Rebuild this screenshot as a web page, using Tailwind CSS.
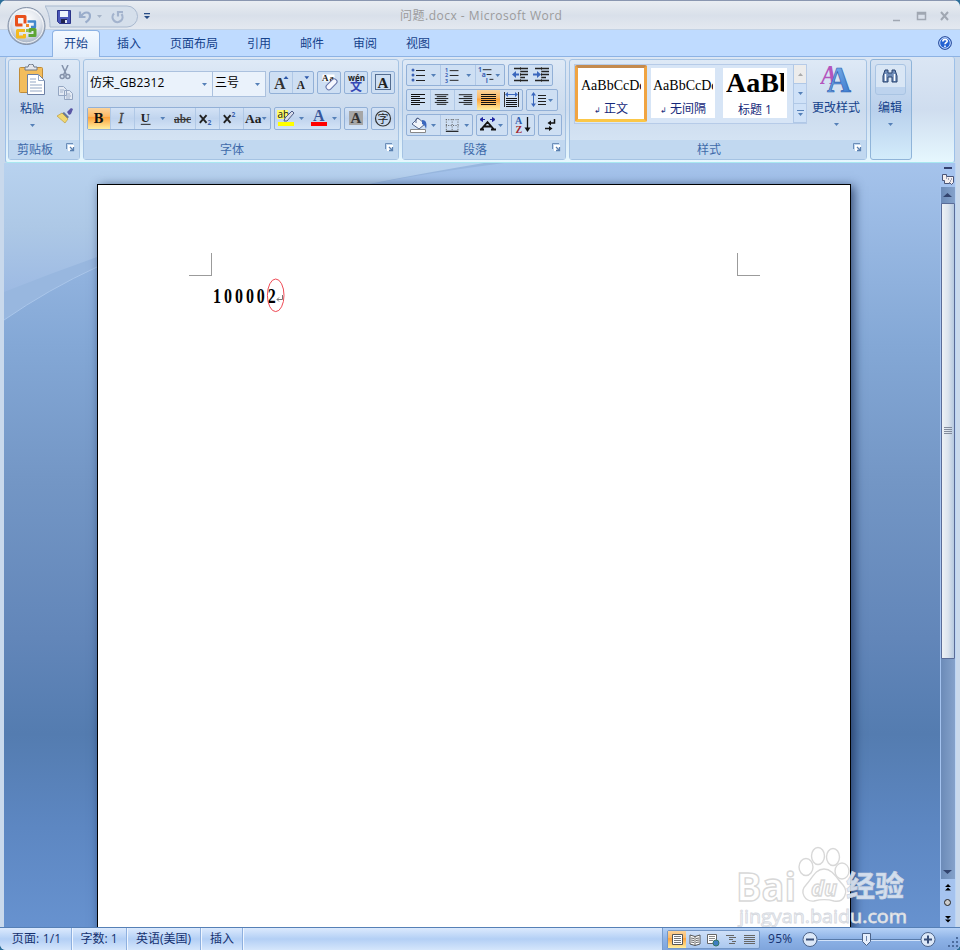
<!DOCTYPE html>
<html lang="zh-CN">
<head>
<meta charset="utf-8">
<title>问题.docx - Microsoft Word</title>
<script src="https://cdn.jsdelivr.net/npm/@tailwindcss/browser@4"></script>
</head>
<body class="w-[960px] h-[950px] overflow-hidden bg-[#2d6f9a] text-[12px] leading-[16px] text-[#15428b] [font-family:'Open_Sans','Noto_Sans_CJK_SC',sans-serif]">

<svg class="absolute size-0">
  <defs>
    <linearGradient id="orange" x1="0" y1="0" x2="0" y2="1"><stop offset="0" stop-color="#fbd49c"/><stop offset=".4" stop-color="#fdb965"/><stop offset=".45" stop-color="#fda23c"/><stop offset="1" stop-color="#ffef9f"/></linearGradient>
    <linearGradient id="blueA" x1="0" y1="0" x2="1" y2="1"><stop offset="0" stop-color="#89bdf2"/><stop offset="1" stop-color="#3272c9"/></linearGradient>
    <radialGradient id="orb" cx=".5" cy=".35" r=".65"><stop offset="0" stop-color="#fff"/><stop offset=".6" stop-color="#dfe4ec"/><stop offset="1" stop-color="#9ba9bd"/></radialGradient>
    <symbol id="dd" viewBox="0 0 5 3"><path d="M0 0h5L2.500 3z" fill="#5580b8"/></symbol>
    <symbol id="launch" viewBox="0 0 9 9"><path d="M.5 6V.5H7" fill="none" stroke="#6b8db8"/><rect x="2" y="2" width="6" height="6" fill="#fff"/><path d="M4 4l3 3M7.500 4v3.500H4" fill="none" stroke="#5a80b0" stroke-width="1.300"/></symbol>
  </defs>
</svg>

<div class="flex flex-col w-[960px] h-[950px] rounded-t-[7px] rounded-b-[6px] overflow-hidden bg-[#c9d9ec]">

  <!-- title bar -->
  <header class="relative flex items-center h-[30px] shrink-0 border-t border-[#8996b0] bg-linear-to-b from-[#e9edf2] via-[#d9e0ea] to-[#e4e9f0] shadow-[inset_0_-1px_0_#c3d2e4]">
    <svg class="absolute left-[45px] top-[4px]" width="94" height="24" viewBox="0 0 94 24">
      <path d="M0 1H82a10.500 10.500 0 0 1 0 21H5C5 12 3 6 0 1z" fill="#d5dfeb" stroke="#a9b9cf"/>
    </svg>
    <div class="relative flex items-center w-[400px] pl-[57px] pt-[2px] gap-[6px]">
      <svg width="14" height="14" viewBox="0 0 14 14"><path d="M.5.5h13v13h-11l-2-2z" fill="#4a56b8" stroke="#2b3488"/><path d="M3 1h8v6H3z" fill="#edf3fc"/><path d="M4 9h6v4H4z" fill="#20234f"/><path d="M8 10h2v3H8z" fill="#dfe6f4"/></svg>
      <svg width="28" height="14" viewBox="0 0 28 14"><path d="M3 1.500v5.500h5.500M4 6.500C7 1 13 1.500 13 6c0 3-2 5-4.500 6.500" fill="none" stroke="#9aadcb" stroke-width="2.200"/><path d="M20 5h5l-2.500 3z" fill="#a6b4c8"/></svg>
      <svg width="14" height="14" viewBox="0 0 14 14"><path d="M3 3.500A5 5 0 1 0 10.500 4M7 6.500V2h5" fill="none" stroke="#a3b3cd" stroke-width="2.200"/></svg>
      <svg class="ml-[13px]" width="6" height="7" viewBox="0 0 6 7"><path d="M0 0h6v1.200H0zM0 3h6L3 6z" fill="#274b85"/></svg>
    </div>
    <div class="w-[200px] text-[#9b9b9b] tracking-[0.5px] whitespace-nowrap">问题.docx - Microsoft Word</div>
    <svg class="ml-[291px]" width="62" height="14" viewBox="0 0 62 14"><path d="M2 11.500h7M26.500 3.500h8v7h-8zM27 5h8" fill="none" stroke="#a0a7b2" stroke-width="1.500"/><path d="M50 3l7 8M57 3l-7 8" stroke="#a0a7b2" stroke-width="2"/></svg>
  </header>

  <!-- office button -->
  <svg class="absolute left-[6px] top-[5px]" width="42" height="42" viewBox="0 0 42 42">
    <circle cx="20.500" cy="21" r="18.500" fill="url(#orb)" stroke="#8290a6"/>
    <circle cx="20.500" cy="21" r="16.800" fill="none" stroke="#fff" stroke-opacity=".8"/>
    <g fill="none" stroke-width="3" stroke-linejoin="round">
      <path d="M19 18.500V11.500h-8.500v8.500h6" stroke="#e8501c"/><path d="M21.500 16.500h7.500v5.500h-4" stroke="#4288cc" stroke-width="2.400"/>
      <path d="M19 25.500h-7.500v6.500h7v-3" stroke="#f5b91e"/><path d="M22.500 30.500h6.500v-6h-5v3" stroke="#5da533"/>
    </g>
    <path d="M20 19h3v3h-3z" fill="#f28a2a"/><path d="M20 24h3v3h-3z" fill="#93c14e"/>
  </svg>

  <!-- ribbon tabs -->
  <nav class="flex items-end h-[27px] shrink-0 bg-[#bfdbff] px-[5px] shadow-[inset_0_-1px_0_#8db2e3] text-[12px]">
    <div class="relative z-10 ml-[47px] w-[48px] h-[27px] pt-[5px] text-center rounded-t-[4px] border border-b-0 border-[#8db2e3] bg-linear-to-b from-[#f4f9ff] to-[#e0ecfa]">开始</div>
    <div class="flex h-[27px] pt-[6px] pl-[17px] gap-[29px] whitespace-nowrap">
      <span>插入</span><span>页面布局</span><span>引用</span><span>邮件</span><span>审阅</span><span>视图</span>
    </div>
    <svg class="ml-auto mr-[3px] mb-[7px]" width="14" height="14" viewBox="0 0 14 14"><circle cx="7" cy="7" r="6.300" fill="#2462d2" stroke="#1c3d8d"/><circle cx="7" cy="7" r="5.300" fill="none" stroke="#cfe2ff"/><path d="M4.800 5.500c0-3 4.600-2.700 4.400-.3C9.100 6.600 7 6.500 7 8.300M7 9.500V11" fill="none" stroke="#fff" stroke-width="1.600"/></svg>
  </nav>

  <!-- ribbon -->
  <section class="flex h-[106px] shrink-0 mx-[5px] pt-[2px] pl-[2px] gap-[3px] rounded-[3px] border-x border-b border-b-[#a8e8f0] border-x-[#9dc0e8] bg-linear-to-b from-[#dbe6f4] via-[#cfddef] to-[#e6f7fe]">

    <!-- clipboard -->
    <div class="flex flex-col w-[72px] h-[101px] rounded-[3px] border border-[#a5c3e3] bg-linear-to-b from-[#dee9f6] via-[#cbdbee] to-[#dae8f6]">
      <div class="flex h-[80px]">
        <div class="flex flex-col items-center w-[46px] pt-[4px]">
          <svg width="28" height="32" viewBox="0 0 28 32"><rect x="1.500" y="3.500" width="23" height="25" rx="1" fill="#f3bd5c" stroke="#c08c39"/><path d="M7 6V3h3a3 3 0 0 1 6 0h3v3z" fill="#e3e5ea" stroke="#6f7889"/><path d="M9.500 10.500h11l6 6v14h-17z" fill="#fff" stroke="#6c80a5"/><path d="M20.500 10.500v6h6M12 15h6M12 18h6M12 21h12M12 24h12M12 27h12" fill="none" stroke="#93a6c4"/></svg>
          <span class="mt-[5px]">粘贴</span>
          <svg class="mt-[7px]" width="5" height="3"><use href="#dd"/></svg>
        </div>
        <div class="flex flex-col items-center pt-[5px] gap-[6px] ml-[2px]">
          <svg width="12" height="15" viewBox="0 0 12 15"><path d="M3 0l4.500 10M9 0L4.500 10" stroke="#8492aa" stroke-width="1.500"/><circle cx="3.200" cy="11.500" r="2" fill="none" stroke="#8492aa" stroke-width="1.500"/><circle cx="8.800" cy="11.500" r="2" fill="none" stroke="#8492aa" stroke-width="1.500"/></svg>
          <svg width="15" height="14" viewBox="0 0 15 14"><path d="M.5.500h5l3 3v6h-8zM6.500 4.500h5l3 3v6h-8z" fill="#e3eaf4" stroke="#94a6c2"/><path d="M2 4h4M2 6h3M8 8h4M8 10h5M8 12h4" stroke="#a2b2cb"/></svg>
          <svg class="mt-[2px]" width="16" height="16" viewBox="0 0 16 16"><path d="M10 4l4-4 2 1-2 5-2 1z" fill="#5a57a5"/><path d="M7 4l5 5-2 2-6-5z" fill="#67799c"/><path d="M5 5l6 6-3 4L0 8z" fill="#f1d771" stroke="#b79332" stroke-width=".6"/></svg>
        </div>
      </div>
      <div class="flex h-[19px] pt-[2px] justify-between pl-[8px] pr-[4px] bg-[#c1d8f0] text-[#3e6aaa]">剪贴板<svg class="mt-px" width="9" height="9"><use href="#launch"/></svg></div>
    </div>

    <!-- font -->
    <div class="flex flex-col w-[316px] h-[101px] rounded-[3px] border border-[#a5c3e3] bg-linear-to-b from-[#dee9f6] via-[#cbdbee] to-[#dae8f6]">
      <div class="flex flex-col h-[80px] pt-[11px] pl-[3px]">
        <div class="flex h-[36px] items-start">
          <div class="flex items-center justify-between w-[126px] h-[26px] pl-[2px] pr-[5px] border border-[#abc1de] bg-[#eaf2fb] text-black"><span class="pb-[2px] tracking-[0.15px]">仿宋_GB2312</span><svg width="5" height="3"><use href="#dd"/></svg></div>
          <div class="flex items-center justify-between w-[54px] h-[26px] -ml-px mr-[3px] pl-[2px] pr-[5px] border border-[#abc1de] bg-[#eaf2fb] text-black"><span class="pb-[2px]">三号</span><svg width="5" height="3"><use href="#dd"/></svg></div>
          <div class="flex gap-[3px] [&>div]:flex [&>div]:h-[23px] [&>div]:border [&>div]:border-[#92b0d7] [&>div]:rounded-[2px] [&>div]:bg-[#cedff3]">
            <div class="w-[45px]">
              <svg width="22" height="21" viewBox="0 0 22 21"><text x="4" y="17" font-family="Liberation Serif" font-weight="bold" font-size="16" fill="#333">A</text><path d="M13.500 7l2.500-3 2.500 3z" fill="#2c57a8"/></svg>
              <svg class="border-l border-[#b0c8e6]" width="21" height="21" viewBox="0 0 21 21"><text x="4" y="17" font-family="Liberation Serif" font-weight="bold" font-size="12" fill="#222">A</text><path d="M12 4h5l-2.500 3z" fill="#2c57a8"/></svg>
            </div>
            <div class="w-[24px]"><svg width="22" height="21" viewBox="0 0 22 21"><path d="M4.500 2.500h12v7h-12z" fill="#fff"/><text x="4" y="9" font-family="Liberation Serif" font-weight="bold" font-size="9" textLength="12" fill="#222">Aa</text><rect x="7" y="10" width="13" height="5.500" rx="2.500" transform="rotate(-45 13 12.500)" fill="#f6f7ff" stroke="#6674a8"/></svg></div>
            <div class="w-[24px]"><svg width="22" height="21" viewBox="0 0 22 21"><text x="3" y="9" font-size="9" font-weight="bold" textLength="17" lengthAdjust="spacingAndGlyphs" fill="#222">wén</text><text x="5" y="18.500" font-size="12" font-weight="bold" fill="#3648b5">文</text></svg></div>
            <div class="w-[24px]"><svg width="22" height="21" viewBox="0 0 22 21"><rect x="3.500" y="2.500" width="15" height="15" fill="none" stroke="#536c90"/><text x="5.500" y="16" font-family="Liberation Serif" font-weight="bold" font-size="15" fill="#222">A</text></svg></div>
          </div>
        </div>
        <div class="flex gap-[3px] [&>div]:flex [&>div]:h-[23px] [&>div]:border [&>div]:border-[#92b0d7] [&>div]:rounded-[2px] [&>div]:bg-linear-to-b [&>div]:from-[#d3e2f5] [&>div]:via-[#c0d4ee] [&>div]:to-[#d3e3f6] [&_svg]:shrink-0">
          <div class="w-[184px]">
            <svg width="22" height="21" viewBox="0 0 22 21"><path d="M0 0h22v21H0z" fill="url(#orange)"/><text x="5.500" y="15" font-family="DejaVu Serif" font-weight="bold" font-size="12" fill="#111">B</text></svg>
            <svg class="border-l border-[#b0c8e6]" width="24" height="21" viewBox="0 0 24 21"><text x="8" y="15" font-family="DejaVu Serif" font-style="italic" font-size="13" stroke="#444" stroke-width=".3" fill="#444">I</text></svg>
            <svg class="border-l border-[#b0c8e6]" width="37" height="21" viewBox="0 0 37 21"><text x="6" y="14" font-family="Liberation Serif" font-weight="bold" font-size="13" fill="#222">U</text><path d="M6 16.500h10" stroke="#222"/><path d="M26 9h5l-2.500 3z" fill="#5580b8"/></svg>
            <svg width="24" height="21" viewBox="0 0 24 21"><text x="3" y="15" font-family="Liberation Serif" font-weight="bold" font-size="13" textLength="17" lengthAdjust="spacingAndGlyphs" fill="#444">abc</text><path d="M3 11.500h17" stroke="#333"/></svg>
            <svg class="border-l border-[#b0c8e6]" width="24" height="21" viewBox="0 0 24 21"><path d="M4 7l7 8M11 7l-7 8" stroke="#222" stroke-width="2"/><text x="12" y="17" font-size="7" font-weight="bold" fill="#3b62ae">2</text></svg>
            <svg class="border-l border-[#b0c8e6]" width="24" height="21" viewBox="0 0 24 21"><path d="M4 7l7 8M11 7l-7 8" stroke="#222" stroke-width="2"/><text x="12" y="9" font-size="7" font-weight="bold" fill="#3b62ae">2</text></svg>
            <svg class="border-l border-[#b0c8e6]" width="27" height="21" viewBox="0 0 27 21"><text x="1" y="15" font-family="Liberation Serif" font-weight="bold" font-size="14" fill="#222">Aa</text><path d="M18.500 9h5l-2.500 3z" fill="#5580b8"/></svg>
          </div>
          <div class="w-[67px]">
            <svg width="33" height="21" viewBox="0 0 33 21"><path d="M2 2h11v9H2z" fill="#fdfb6a"/><text x="2.500" y="10" font-size="10" fill="#111">ab</text><path d="M17 3l2 2-7 8h-3l1-3z" fill="#d8dcea" stroke="#4d5b85"/><path d="M3 14h16v4H3z" fill="#ff0"/><path d="M24 9h5l-2.500 3z" fill="#5580b8"/></svg>
            <svg width="32" height="21" viewBox="0 0 32 21"><text x="5" y="13" font-family="Liberation Serif" font-weight="bold" font-size="16" fill="#38579b">A</text><path d="M3 14h16v4H3z" fill="#f00"/><path d="M24 9h5l-2.500 3z" fill="#5580b8"/></svg>
          </div>
          <div class="w-[24px]"><svg width="22" height="21" viewBox="0 0 22 21"><path d="M4 3h14v14H4z" fill="#a6a6a6"/><text x="5.500" y="15" font-family="Liberation Serif" font-weight="bold" font-size="15" fill="#333">A</text></svg></div>
          <div class="w-[24px]"><svg width="22" height="21" viewBox="0 0 22 21"><circle cx="11" cy="10.500" r="7.500" fill="none" stroke="#333" stroke-width="1.200"/><text x="5.500" y="14.500" font-size="11" fill="#222">字</text></svg></div>
        </div>
      </div>
      <div class="flex h-[19px] pt-[2px] justify-between pl-[136px] pr-[4px] bg-[#c1d8f0] text-[#3e6aaa]">字体<svg class="mt-px" width="9" height="9"><use href="#launch"/></svg></div>
    </div>

    <!-- paragraph -->
    <div class="flex flex-col w-[164px] h-[101px] rounded-[3px] border border-[#a5c3e3] bg-linear-to-b from-[#dee9f6] via-[#cbdbee] to-[#dae8f6]">
      <div class="flex flex-col gap-[3px] h-[80px] pt-[4px] pl-[3px] [&>div]:flex [&>div]:gap-[3px] [&>div>div]:flex [&>div>div]:h-[22px] [&>div>div]:border [&>div>div]:border-[#92b0d7] [&>div>div]:rounded-[2px] [&>div>div]:bg-[#cedff3] [&_svg]:shrink-0">
        <div>
          <div class="w-[99px]">
            <svg width="33" height="20" viewBox="0 0 33 20"><g fill="#3c62b4"><circle cx="6" cy="5" r="1.500"/><circle cx="6" cy="10" r="1.500"/><circle cx="6" cy="15" r="1.500"/></g><path d="M9 5.500h9M9 10.500h9M9 15.500h9" stroke="#222"/><path d="M24 9h5l-2.500 3z" fill="#5580b8"/></svg>
            <svg class="border-l border-[#b0c8e6]" width="35" height="20" viewBox="0 0 35 20"><g font-size="5.500" font-weight="bold" fill="#3c62b4"><text x="4" y="6.500">1</text><text x="4" y="12.300">2</text><text x="4" y="18">3</text></g><path d="M9 5.500h9M9 10.500h9M9 15.500h9" stroke="#222"/><path d="M26 9h5l-2.500 3z" fill="#5580b8"/></svg>
            <svg class="border-l border-[#b0c8e6]" width="29" height="20" viewBox="0 0 29 20"><g font-size="7" font-weight="bold" fill="#3c62b4"><text x="2" y="7">1</text><text x="6" y="12.500">a</text><text x="10" y="18.500">i</text></g><path d="M7 4.500h9M11 9.500h5M14 14.500h4" stroke="#222"/><path d="M20 9h5l-2.500 3z" fill="#5580b8"/></svg>
          </div>
          <div class="w-[45px]">
            <svg width="22" height="20" viewBox="0 0 22 20"><path d="M5 3.500h14M11 6.500h8M11 9.500h8M11 12.500h5M5 15.500h14" stroke="#222" stroke-width="1.400"/><path d="M3 9.500l4-3.500v2.500h3v2H7V13z" fill="#3a67bd"/><path d="M11.500 2v15" stroke="#555" stroke-dasharray="1 1"/></svg>
            <svg width="21" height="20" viewBox="0 0 21 20"><path d="M4 3.500h14M10 6.500h8M10 9.500h8M10 12.500h5M4 15.500h14" stroke="#222" stroke-width="1.400"/><path d="M10 9.500L6 6v2.500H2v2h4V13z" fill="#3a67bd"/><path d="M10.500 2v15" stroke="#555" stroke-dasharray="1 1"/></svg>
          </div>
        </div>
        <div>
          <div class="w-[117px]">
            <svg width="23" height="20" viewBox="0 0 23 20"><path d="M4 4.500h14M4 6.500h9M4 8.500h14M4 10.500h9M4 12.500h14M4 14.500h9" stroke="#111"/></svg>
            <svg class="border-l border-[#b0c8e6]" width="24" height="20" viewBox="0 0 24 20"><path d="M4 4.500h14M6 6.500h10M4 8.500h14M6 10.500h10M4 12.500h14M6 14.500h10" stroke="#111"/></svg>
            <svg class="border-l border-[#b0c8e6]" width="23" height="20" viewBox="0 0 23 20"><path d="M4 4.500h14M9 6.500h9M4 8.500h14M9 10.500h9M4 12.500h14M9 14.500h9" stroke="#111"/></svg>
            <svg width="23" height="20" viewBox="0 0 23 20"><path d="M0 0h23v20H0z" fill="url(#orange)"/><path d="M4 4.500h15M4 6.500h15M4 8.500h15M4 10.500h15M4 12.500h15M4 14.500h15" stroke="#111"/></svg>
            <svg width="22" height="20" viewBox="0 0 22 20"><path d="M4.500 2v15M18.500 2v15" stroke="#333"/><path d="M6 8.500h11M6 10.500h11M6 12.500h11M6 14.500h11M6 16.500h11" stroke="#111"/><path d="M5 4.500l3-2.500v2h7V2l3 2.500L15 7V5H8v2z" fill="#3a67bd"/></svg>
          </div>
          <div class="w-[32px]"><svg width="30" height="20" viewBox="0 0 30 20"><path d="M6.500 2L4 5.500h2v8H4L6.500 17 9 13.500H7v-8h2z" fill="#3a67bd"/><path d="M11 5.500h8M11 8.500h8M11 11.500h8M11 14.500h8" stroke="#222"/><path d="M21 9h5l-2.500 3z" fill="#5580b8"/></svg></div>
        </div>
        <div>
          <div class="w-[67px]">
            <svg width="33" height="20" viewBox="0 0 33 20"><path d="M5 9l6-6 7 6-6 5z" fill="#f2f5fa" stroke="#52658c"/><path d="M9 8V4a2 2 0 0 1 3 0" fill="none" stroke="#52658c"/><path d="M15 5c5 0 5 5 4 9-1-4-2-4-4-5z" fill="#3a67bd"/><path d="M3.500 14.500h15v3h-15z" fill="#fff" stroke="#888"/><path d="M24 9h5l-2.500 3z" fill="#5580b8"/></svg>
            <svg class="border-l border-[#b0c8e6]" width="32" height="20" viewBox="0 0 32 20"><path d="M5.500 4v12M17.500 4v12M11.500 4v12M5 4.500h13M5 10.500h13" stroke="#555" stroke-dasharray="1 1.500"/><path d="M5 16.500h13" stroke="#111" stroke-width="1.200"/><path d="M24 9h5l-2.500 3z" fill="#5580b8"/></svg>
          </div>
          <div class="w-[32px]"><svg width="30" height="20" viewBox="0 0 30 20"><path d="M3 4.500l2.500-2v4zM18 4.500l-2.500-2v4zM5 4.500h3M13 4.500h3" fill="#2027a0" stroke="#2027a0"/><path d="M3 14.500h4M14 14.500h5M4 14.500l6.500-7.500 6.500 7.500M7 11.500h7" fill="none" stroke="#111" stroke-width="1.800"/><path d="M21 9h5l-2.500 3z" fill="#5580b8"/></svg></div>
          <div class="w-[24px]"><svg width="22" height="20" viewBox="0 0 22 20"><text x="3" y="9" font-size="10" font-family="Liberation Serif" font-weight="bold" fill="#2e5cab">A</text><text x="3.500" y="17.500" font-size="10" font-family="Liberation Serif" font-weight="bold" fill="#a3272f">Z</text><path d="M15.500 2v12" stroke="#111" stroke-width="1.300"/><path d="M12.500 12.500h6l-3 4.500z" fill="#111"/></svg></div>
          <div class="w-[24px]"><svg width="22" height="20" viewBox="0 0 22 20"><path d="M15.500 4v4H11M6 13.500h5" fill="none" stroke="#111" stroke-width="1.500"/><path d="M12 5.500v5L8.500 8zM10 11v5l3.500-2.500z" fill="#111"/></svg></div>
        </div>
      </div>
      <div class="flex h-[19px] pt-[2px] justify-between pl-[60px] pr-[4px] bg-[#c1d8f0] text-[#3e6aaa]">段落<svg class="mt-px" width="9" height="9"><use href="#launch"/></svg></div>
    </div>

    <!-- styles -->
    <div class="flex flex-col w-[298px] h-[101px] rounded-[3px] border border-[#a5c3e3] bg-linear-to-b from-[#dee9f6] via-[#cbdbee] to-[#dae8f6]">
      <div class="flex h-[80px] pt-[4px] pl-[4px]">
        <div class="flex w-[233px] h-[60px] border border-[#b6cbe8] bg-[#d7e5f6] text-center whitespace-nowrap">
          <div class="w-[72px] h-[57px] border-[3px] border-[#f0a442] border-t-[#c48a4e] border-b-[#fbc747] rounded-[2px] bg-white overflow-hidden">
            <div class="mx-[3px] mt-[9px] h-[18px] overflow-hidden text-left text-[14px] leading-[17px] text-black [font-family:'Liberation_Serif',serif]">AaBbCcDc</div>
            <div class="mt-[6px] leading-[16px] text-[#15287a]"><span class="text-[8px] mr-[3px]">↲</span>正文</div>
          </div>
          <div class="w-[64px] h-[50px] ml-[4px] mt-[3px] bg-white overflow-hidden">
            <div class="mx-[2px] mt-[9px] h-[18px] overflow-hidden text-left text-[14px] leading-[17px] text-black [font-family:'Liberation_Serif',serif]">AaBbCcDc</div>
            <div class="mt-[6px] leading-[16px] text-[#15287a]"><span class="text-[8px] mr-[3px]">↲</span>无间隔</div>
          </div>
          <div class="w-[64px] h-[50px] ml-[8px] mt-[3px] bg-white overflow-hidden">
            <div class="ml-[3px] mr-[3px] h-[30px] overflow-hidden text-left text-[28px] leading-[30px] font-bold text-black [font-family:'Liberation_Serif',serif]">AaBb</div>
            <div class="mt-[4px] leading-[16px] text-[#15287a]">标题 1</div>
          </div>
          <div class="flex flex-col ml-auto w-[13px] [&>div]:flex [&>div]:flex-col [&>div]:items-center [&>div]:justify-center [&>div]:gap-[2px] [&>div]:flex-1 [&>div]:border-l [&>div]:border-b [&>div]:border-[#b0c8e6]">
            <div class="bg-[#ececec]"><svg width="5" height="3"><path d="M0 3h5L2.500 0z" fill="#aaa"/></svg></div>
            <div class="bg-[#cfe1f7]"><svg width="5" height="3"><use href="#dd"/></svg></div>
            <div class="bg-[#cfe1f7]"><span class="w-[7px] h-px bg-[#5580b8]"></span><svg width="5" height="3"><use href="#dd"/></svg></div>
          </div>
        </div>
        <div class="flex flex-col items-center w-[58px]">
          <svg width="32" height="30" viewBox="0 0 32 30"><text x="1" y="20" font-family="Liberation Serif" font-style="italic" font-weight="bold" font-size="28" fill="#b455bd" textLength="16" lengthAdjust="spacingAndGlyphs">A</text><text x="7" y="28" font-family="Liberation Serif" font-weight="bold" font-size="35" textLength="24" lengthAdjust="spacingAndGlyphs" fill="url(#blueA)" stroke="#2d5daf" stroke-width=".7">A</text></svg>
          <span class="mt-[6px]">更改样式</span>
          <svg class="mt-[7px]" width="5" height="3"><use href="#dd"/></svg>
        </div>
      </div>
      <div class="flex h-[19px] pt-[2px] justify-between pl-[127px] pr-[4px] bg-[#c1d8f0] text-[#3e6aaa]">样式<svg class="mt-px" width="9" height="9"><use href="#launch"/></svg></div>
    </div>

    <!-- editing -->
    <div class="flex flex-col items-center w-[42px] h-[101px] pt-[4px] pr-[2px] rounded-[3px] border border-[#8fb4d9] bg-linear-to-b from-[#d5e2f2] via-[#b9d0ec] to-[#d3ecfb]">
      <div class="flex justify-center w-[31px] h-[31px] pt-[4px] rounded-[3px] border border-[#a9c4e3] bg-linear-to-b from-[#d9e6f5] from-75% to-[#bdd3ee] to-75%">
        <svg width="16" height="15" viewBox="0 0 16 15"><path d="M3 1h3v3h4V1h3l2 6v6h-5V8H6v5H1V7z" fill="#6d8bb8" stroke="#27416f"/><path d="M3.500 5v7M12.500 5v7" stroke="#fff" stroke-width="1.500"/></svg>
      </div>
      <span class="mt-[5px]">编辑</span>
      <svg class="mt-[7px]" width="5" height="3"><use href="#dd"/></svg>
    </div>
  </section>

  <!-- workspace -->
  <main class="relative flex h-[764px] shrink-0 mx-[4px] overflow-hidden bg-[linear-gradient(to_bottom,#a5c3eb_0px,#84a8d6_180px,#7396c5_320px,#6286b9_475px,#547cb0_571px,#5d87c2_665px,#6792cf_764px)]">
    <svg class="absolute left-0 top-0" width="500" height="160" viewBox="0 0 500 160">
      <defs><linearGradient id="sky" x1="0" y1="0" x2="0" y2="1"><stop offset="0" stop-color="#b8d2ef"/><stop offset=".5" stop-color="#adc8e6"/><stop offset="1" stop-color="#9dbae3"/></linearGradient></defs>
      <path d="M0 157Q45 126 93 104Q230 35 500 0H0z" fill="#98b7df"/>
      <path d="M0 129Q45 111 93 94Q250 38 480 0H0z" fill="url(#sky)"/>
      <path d="M0 157Q45 126 93 104" fill="none" stroke="#aac6ea"/>
    </svg>
    <!-- page -->
    <article class="relative mt-[21px] ml-[93px] w-[754px] h-[760px] shrink-0 border border-black bg-white shadow-[3px_2px_10px_rgba(20,40,80,0.75)]">
      <div class="flex justify-between pt-[68px] px-[91px]">
        <div class="w-[23px] h-[23px] border-r border-b border-[#9b9b9b]"></div>
        <div class="w-[23px] h-[23px] -mr-[1px] border-l border-b border-[#9b9b9b]"></div>
      </div>
      <div class="flex items-center pl-[115px] mt-[9px] h-[22px] text-black">
        <span class="w-[63px] origin-left scale-x-[0.8] text-[20px] leading-[22px] font-bold tracking-[3.700px] [font-family:'Liberation_Serif',serif]">100002</span>
        <svg class="mt-[6px]" width="8" height="8" viewBox="0 0 8 8"><path d="M6.500 0v4.500H1M3 2.500l-2 2 2 2" fill="none" stroke="#777"/></svg>
      </div>
      <svg class="absolute left-[168px] top-[93px]" width="20" height="35"><ellipse cx="9.700" cy="17.300" rx="8.300" ry="16.300" fill="none" stroke="#ef4a55"/></svg>
    </article>
    <!-- scrollbar -->
    <div class="flex flex-col items-center ml-auto w-[16px] h-[764px] bg-[#a5c3ef] border-r border-[#bcd5f5]">
      <div class="mt-[4px] w-[8px] h-[2px] shrink-0 bg-[#33406e]"></div>
      <svg class="mt-[4px] shrink-0" width="12" height="13" viewBox="0 0 12 13"><path d="M.5 1.500h4v2h7v6l-2 2-2-2v1h-5v-3h-2z" fill="#f4eeef" stroke="#4a5578"/><path d="M4 5h1M6 6h1M9 6h1M8 8h1" stroke="#4a5578"/></svg>
      <div class="flex flex-col w-[14px] mt-[1px] h-[692px] shrink-0 bg-linear-to-r from-[#6c8bb8] to-[#85a2cb]">
        <div class="flex items-center justify-center h-[16px]"><svg width="9" height="4"><path d="M0 4h9L4.500 0z" fill="#33446f"/></svg></div>
        <div class="flex items-center justify-center h-[456px] border border-[#5a6c98] rounded-[1px] bg-linear-to-r from-[#edf1f5] via-[#dce4ee] to-[#b5c8df]">
          <svg width="8" height="8"><path d="M0 .5h8M0 2.500h8M0 4.500h8M0 6.500h8" stroke="#828b9c"/></svg>
        </div>
        <div class="flex items-end justify-center flex-1 pb-[5px]"><svg width="9" height="4"><path d="M0 0h9L4.500 4z" fill="#33446f"/></svg></div>
      </div>
      <svg class="shrink-0" width="14" height="48" viewBox="0 0 14 48"><path d="M4 8l3-3 3 3zM4 11.500l3-3 3 3z"/><circle cx="6.500" cy="23.500" r="3" fill="#ccc" stroke="#222"/><path d="M4 37l3 3 3-3zM4 40.500l3 3 3-3z"/></svg>
    </div>
    <!-- watermark -->
    <svg class="absolute left-[730px] top-[680px]" width="180" height="84" viewBox="0 0 180 84">
      <g fill="#fff" fill-opacity=".8" stroke="#d8d8d8" stroke-width="1.400">
        <text x="2" y="58" font-family="Open Sans" font-weight="bold" font-size="39" textLength="60" lengthAdjust="spacingAndGlyphs">Bai</text>
        <ellipse cx="72" cy="24" rx="7" ry="8.500"/><ellipse cx="84" cy="13" rx="6.500" ry="8.500"/><ellipse cx="99" cy="14" rx="6.500" ry="8.500"/><ellipse cx="108" cy="28" rx="7" ry="8"/>
        <path d="M90 26c-9 0-12 10-18 16-7 7-1 17 8 16 8-2 13-2 20 0 10 2 15-9 9-16-6-6-10-16-19-16z"/>
        <text x="77" y="53" font-family="Open Sans" font-weight="bold" font-style="italic" font-size="22" textLength="26" lengthAdjust="spacingAndGlyphs">du</text>
      </g>
      <text x="112" y="54" font-family="Noto Sans CJK SC" font-weight="bold" font-size="29" fill="#e3ebf5" fill-opacity=".9" stroke="#cbd3df" stroke-width=".7">经验</text>
      <text x="5" y="80" font-family="Open Sans" font-size="18" textLength="168" lengthAdjust="spacingAndGlyphs" fill="#f5f7fb" stroke="#d6d9df" stroke-width=".8">jingyan.baidu.com</text>
    </svg>
  </main>

  <!-- status bar -->
  <footer class="flex h-[23px] shrink-0 border-t border-[#5680b6] bg-linear-to-b from-[#dceafd] from-0% via-[#b3cff5] via-50% to-[#d5e6fb] text-[#15316f] whitespace-nowrap">
    <div class="flex ml-px [&>span]:pt-[3px] [&>span]:h-[22px] [&>span]:border-r [&>span]:border-[#8eb0df] [&>span]:pr-[8px] [&>span]:pl-[9px] [&>span]:shadow-[1px_0_0_#eff6ff]">
      <span class="w-[70px] ml-[1px] -indent-px tracking-[0.15px] text-center">页面: 1/1</span><span class="w-[55px] -indent-px text-center">字数: 1</span><span class="w-[74px]">英语(美国)</span><span class="w-[42px]">插入</span>
    </div>
    <div class="flex items-center ml-auto w-[298px] h-[22px] pl-[4px] border-l border-[#7a9dcc] bg-linear-to-b from-[#b5d1f6] via-[#8db2e6] to-[#7fa5dc]">
      <div class="flex w-[93px] h-[19px] border border-[#7396c6] rounded-[2px] bg-linear-to-b from-[#cfe0f8] to-[#abc8ef]">
        <svg width="18" height="17" viewBox="0 0 18 17"><path d="M0 0h18v17H0z" fill="url(#orange)"/><path d="M4.500 3.500h10v10h-10z" fill="#fff" stroke="#555"/><path d="M6 5.500h7M6 7.500h7M6 9.500h7M6 11.500h7" stroke="#777"/></svg>
        <svg width="18" height="17" viewBox="0 0 18 17"><path d="M4 4l5 1.500L14 4v9l-5 1.500L4 13z" fill="#fff" stroke="#555"/><path d="M9 5v9M5 7l3 .5M5 9l3 .5M5 11l3 .5M10 7.500l3-.5M10 9.500l3-.5M10 11.500l3-.5" stroke="#666"/></svg>
        <svg width="18" height="17" viewBox="0 0 18 17"><path d="M3.500 3.500h9v9h-9z" fill="#fff" stroke="#666"/><path d="M5 5.500h6M5 7.500h6M5 9.500h4" stroke="#888"/><circle cx="12" cy="12" r="3" fill="#3c7ec2" stroke="#376"/></svg>
        <svg width="18" height="17" viewBox="0 0 18 17"><path d="M4 4.500h8M7 6.500h7M7 8.500h4M10 10.500h4M7 12.500h6" stroke="#666"/></svg>
        <svg width="18" height="17" viewBox="0 0 18 17"><path d="M4 4.500h11M4 6.500h11M4 8.500h11M4 10.500h11M4 12.500h11" stroke="#666"/></svg>
      </div>
      <span class="w-[26px] ml-[8px] tracking-[0.3px]">95%</span>
      <svg class="ml-[7px]" width="159" height="20" viewBox="0 0 159 20"><path d="M17 10.500h103" stroke="#577aaa"/><path d="M17 11.500h103" stroke="#d2e3fa"/><g fill="#dce8f8" stroke="#4b6288"><circle cx="9" cy="10.500" r="7"/><circle cx="127" cy="10.500" r="7"/></g><path d="M5 10.500h8M123 10.500h8M127 6.500v8" stroke="#384e78" stroke-width="2"/><path d="M61.500 4.500h8v8l-4 4-4-4z" fill="#e5eefb" stroke="#4b6288"/><path d="M65.500 7v5" stroke="#6b84ac"/><path d="M155 8h2v2h-2zM151 12h2v2h-2zM155 12h2v2h-2zM147 16h2v2h-2zM151 16h2v2h-2zM155 16h2v2h-2z" fill="#4c6c9d"/></svg>
    </div>
  </footer>
</div>
</body>
</html>
